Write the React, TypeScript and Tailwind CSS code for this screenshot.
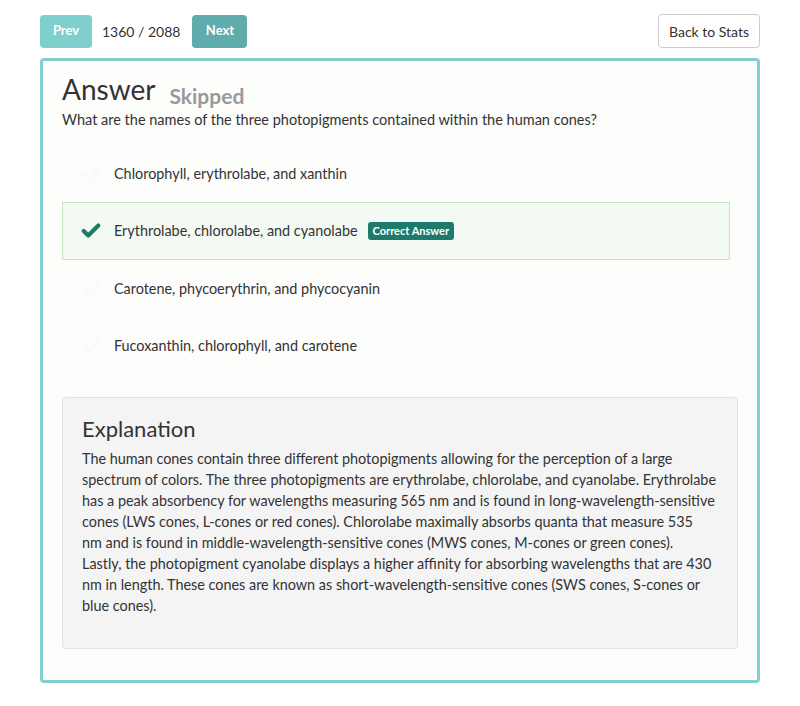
import { Check } from 'lucide-react'

const options = [
    { text: 'Chlorophyll, erythrolabe, and xanthin', correct: false },
    { text: 'Erythrolabe, chlorolabe, and cyanolabe', correct: true },
    { text: 'Carotene, phycoerythrin, and phycocyanin', correct: false },
    { text: 'Fucoxanthin, chlorophyll, and carotene', correct: false },
]

const explanation = [
    'The human cones contain three different photopigments allowing for the perception of a large',
    'spectrum of colors. The three photopigments are erythrolabe, chlorolabe, and cyanolabe. Erythrolabe',
    'has a peak absorbency for wavelengths measuring 565 nm and is found in long-wavelength-sensitive',
    'cones (LWS cones, L-cones or red cones). Chlorolabe maximally absorbs quanta that measure 535',
    'nm and is found in middle-wavelength-sensitive cones (MWS cones, M-cones or green cones).',
    'Lastly, the photopigment cyanolabe displays a higher affinity for absorbing wavelengths that are 430',
    'nm in length. These cones are known as short-wavelength-sensitive cones (SWS cones, S-cones or',
    'blue cones).',
]

export default function App() {
    return (
        <div className="w-[800px] h-[706px] bg-white text-[#333] font-['Lato',sans-serif] px-10 pt-[14px]">
            <div className="flex items-center justify-between">
                <div className="flex items-center">
                    <button className="h-[33px] w-[52px] rounded bg-[#80cfcf] text-white text-[13px] font-bold">
                        Prev
                    </button>
                    <span className="ml-[10px] mr-[12px] text-[14px] text-[#333]">1360 / 2088</span>
                    <button className="h-[33px] w-[55px] rounded bg-[#5eacab] text-white text-[13px] font-bold">
                        Next
                    </button>
                </div>
                <button className="h-[34px] w-[102px] rounded border border-[#ccc] bg-white text-[14px] text-[#333]">
                    Back to Stats
                </button>
            </div>

            <div className="mt-[10px] h-[625px] rounded border-[3px] border-[#80d0d0] bg-[#fdfdfc] px-[19px] pt-[10px]">
                <div className="flex items-end">
                    <h1 className="text-[28px] leading-[36px] text-[#333]">Answer</h1>
                    <span className="ml-[14px] mb-[-4px] text-[21px] font-bold text-[#999]">Skipped</span>
                </div>
                <p className="mt-[3px] text-[14.5px] leading-[20px]">
                    What are the names of the three photopigments contained within the human cones?
                </p>

                <div className="mt-[15px] flex flex-col">
                    {options.map((o) => (
                        <div
                            key={o.text}
                            className={
                                o.correct
                                    ? 'flex h-[58px] items-center border border-[#c7e6c5] bg-[#f3faf3] mr-[8px]'
                                    : 'flex h-[57px] items-center border border-transparent mr-[8px]'
                            }
                        >
                            <div className="w-[51px] flex justify-end pr-[12px]">
                                {o.correct ? (
                                    <Check size={22} strokeWidth={4.5} className="text-[#1e7b6b]" />
                                ) : (
                                    <Check size={22} strokeWidth={4.5} className="text-[#fafaf9]" />
                                )}
                            </div>
                            <span className="text-[14.4px]">{o.text}</span>
                            {o.correct && (
                                <span className="ml-[10px] flex h-[18px] items-center rounded-[3px] bg-[#1e7b6b] px-[5px] text-[11px] font-bold text-white">
                                    Correct Answer
                                </span>
                            )}
                        </div>
                    ))}
                </div>

                <div className="mt-[23px] h-[252px] rounded border border-[#e2e2e2] bg-[#f4f4f4] px-[19px] pt-[16px]">
                    <h2 className="text-[22px] leading-[30px] text-[#333]">Explanation</h2>
                    <p className="mt-[4px] text-[14.4px] leading-[21px] text-[#333]">
                        {explanation.map((line) => (
                            <span key={line} className="block whitespace-nowrap">
                                {line}
                            </span>
                        ))}
                    </p>
                </div>
            </div>
        </div>
    )
}
